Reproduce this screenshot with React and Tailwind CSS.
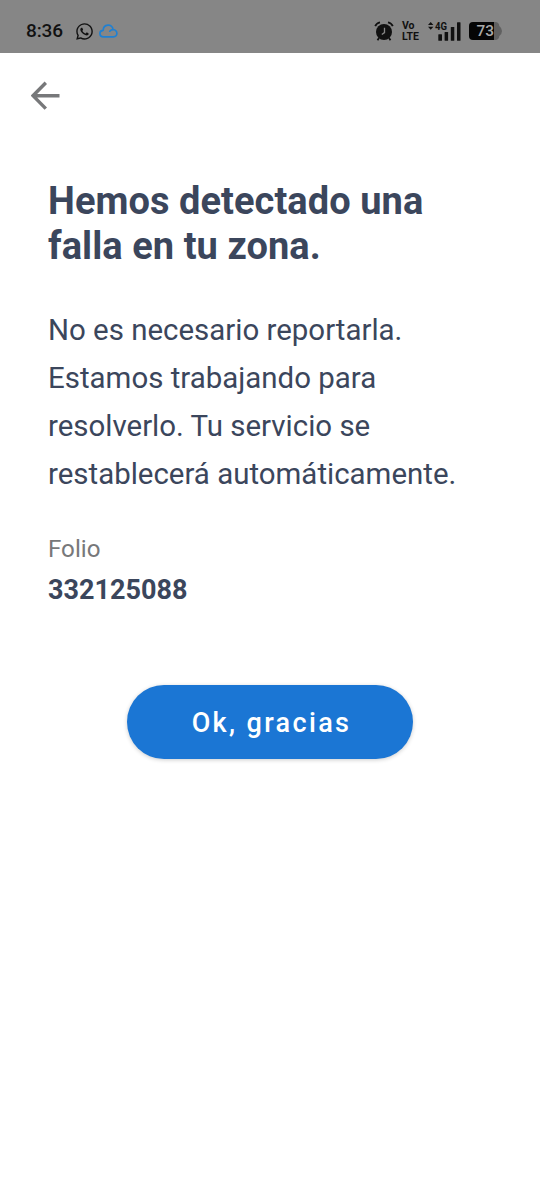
import { FaWhatsapp } from "react-icons/fa";

function AlarmIcon() {
  return (
    <svg className="ml-[374px] h-[20px] w-[20px] shrink-0" viewBox="0 0 20 20" fill="none">
      <circle cx="10" cy="11" r="8" fill="#111" />
      <path d="M1.2 5.2 Q2.6 2 6 1.4M18.8 5.2 Q17.4 2 14 1.4" stroke="#111" strokeWidth="1.8" />
      <path d="M5 17l-1.5 2.3M15 17l1.5 2.3" stroke="#111" strokeWidth="1.8" />
      <path d="M10.5 6.8v4.8L7.8 13.6" stroke="#868686" strokeWidth="1.3" />
    </svg>
  );
}

function StatusBar() {
  return (
    <header className="relative h-[53px] w-full bg-[#868686] text-[#111]">
      <div className="absolute left-[26px] top-[21px] flex h-5 items-center">
        <span className="w-[50px] text-[19px] font-medium leading-5 tracking-[-0.1px]">8:36</span>
        <FaWhatsapp className="-ml-px h-[19px] w-[19px] shrink-0" />
        <svg className="ml-[5px] h-[14px] w-[19px] shrink-0" viewBox="0 0 19 14" fill="none" stroke="#2080d2" strokeWidth="1.7" strokeLinecap="round" strokeLinejoin="round">
          <path d="M4.6 12.8C-.3 12.8-.2 6.5 4.2 6.3C4.2-.2 13.5-.8 14 5.5C19 6 19.2 12.8 14.4 12.8Z" />
          <path d="M14 5.6Q12 5.6 10.8 7.2" />
        </svg>
      </div>
      <div className="flex h-full items-center pt-[9px]">
        <AlarmIcon />
        <div className="ml-[8px] w-[18px] text-[10.5px] font-bold leading-[11px]">
          Vo<br />LTE
        </div>
        <svg className="ml-[8px] h-[20px] w-[34px] shrink-0" viewBox="0 0 34 20" fill="#111">
          <path d="M0 4L2.7 1L5.4 4ZM0 5.7L2.7 8.7L5.4 5.7Z" />
          <text x="7" y="8.6" fontSize="10" fontWeight="700" textLength="12" lengthAdjust="spacingAndGlyphs">4G</text>
          <rect x="10.3" y="13.2" width="3.7" height="6.5" rx=".5" />
          <rect x="16.6" y="11" width="3.5" height="8.7" rx=".5" />
          <rect x="22.8" y="6" width="3.5" height="13.7" rx=".5" />
          <rect x="29" y="1.3" width="3.5" height="18.4" rx=".5" />
        </svg>
        <svg className="ml-[7px] h-[18px] w-[33px] shrink-0" viewBox="0 0 33 18">
          <path d="M24 0h2Q30 0 30.3 4Q33 6 33 9T30.3 14Q30 18 26 18h-2Z" fill="#606060" />
          <path d="M4 0H25V18H4Q0 18 0 14V4Q0 0 4 0Z" fill="#050505" />
          <text x="7.5" y="14.4" fontSize="15.5" fontWeight="500" fill="#aaa" textLength="17.5" lengthAdjust="spacingAndGlyphs">73</text>
        </svg>
      </div>
    </header>
  );
}

export default function App() {
  return (
    <div className="min-h-[1200px] w-[540px] overflow-hidden bg-white font-['Roboto',sans-serif] text-[#3b465c]">
      <StatusBar />
      <button aria-label="Volver" className="ml-[31px] mt-[28px] block h-[29px] w-[29px]">
        <svg viewBox="0 0 29 29" fill="none" stroke="#77787a" strokeWidth="3.4" className="h-full w-full">
          <path d="M28.5 14.7H3M14.8 1.8L2 14.7L14.8 27.6" />
        </svg>
      </button>
      <main className="px-12 pt-[69px]">
        <h1 className="whitespace-nowrap text-[38px] font-bold leading-[45px] tracking-[0.06px]">
          Hemos detectado una<br />falla en tu zona.
        </h1>
        <p className="mt-[37px] whitespace-nowrap text-[29.45px] leading-[48px]">
          No es necesario reportarla.<br />Estamos trabajando para<br />resolverlo. Tu servicio se<br />restablecerá automáticamente.
        </p>
        <div className="mt-[35px] text-[24.2px] leading-[32px] text-[#77787a]">Folio</div>
        <div className="mt-[7px] text-[27px] font-bold leading-[36px]">332125088</div>
        <button className="mx-auto mt-[76.5px] flex h-[74.5px] w-[285.5px] items-center justify-center rounded-full bg-[#1b76d4] pl-[3px] pt-[3px] text-[27px] font-medium tracking-[2.35px] text-white shadow-[0_1px_4px_rgba(0,0,0,0.2)]">
          Ok, gracias
        </button>
      </main>
    </div>
  );
}
